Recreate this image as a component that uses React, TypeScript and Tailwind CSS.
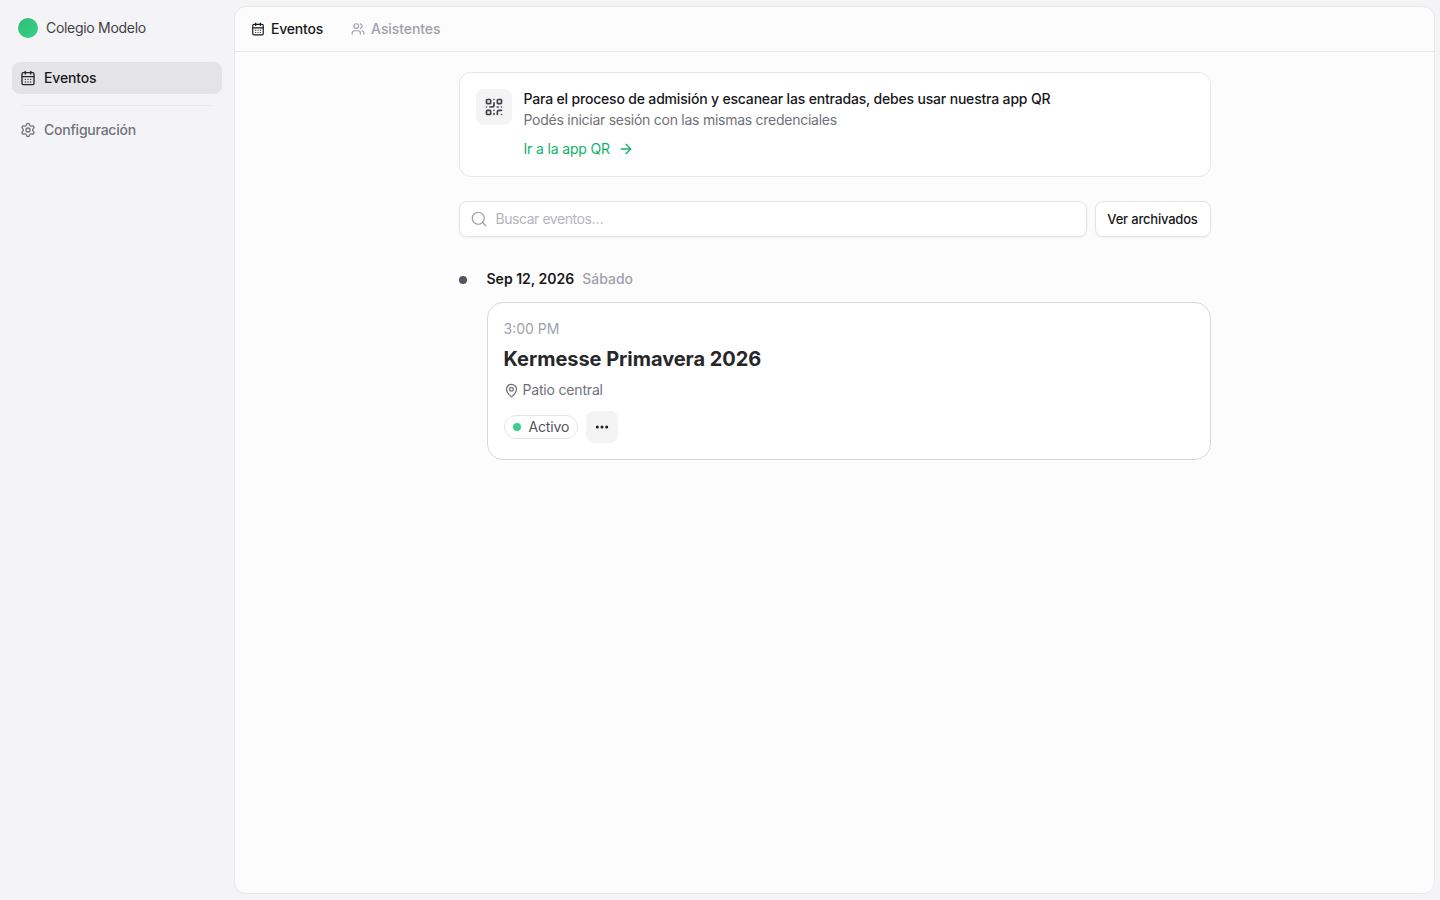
import { CalendarDays, Settings, Users, QrCode, ArrowRight, Search, MapPin, Ellipsis } from "lucide-react";

export default function App() {
  return (
    <div className="flex h-[900px] overflow-hidden bg-[#f4f4f6] font-['Inter',sans-serif] text-[#18181b]">
      <aside className="w-[234px] shrink-0 flex flex-col px-3">
        <div className="flex items-center gap-2 h-10 mt-2 px-[6px]">
          <span className="w-5 h-5 rounded-full bg-gradient-to-br from-[#2fbd76] via-[#34c77f] to-[#3ad08a]" />
          <span className="text-sm tracking-[-0.3px] text-[#3f3f46]">Colegio Modelo</span>
        </div>
        <div className="mt-[14px] h-8 rounded-lg bg-[#e4e4e7] flex items-center gap-2 px-2 text-sm tracking-[-0.14px] font-medium text-[#18181b]">
          <CalendarDays size={16} className="text-[#27272a]" />
          Eventos
        </div>
        <div className="mx-[10px] mt-[11px] mb-2 h-px bg-[#ebebee]" />
        <div className="h-8 flex items-center gap-2 px-2 text-sm tracking-[-0.23px] font-medium text-[#71717a]">
          <Settings size={16} />
          Configuración
        </div>
      </aside>
      <main className="w-[1201px] shrink-0 mt-[6px] h-[888px] rounded-xl border border-[#e8e8eb] bg-[#fcfcfc] flex flex-col">
        <nav className="h-[45px] shrink-0 border-b border-[#e8e8eb] flex items-center gap-7 px-4 text-sm font-medium">
          <div className="flex items-center gap-[6px] tracking-[-0.2px] text-[#18181b]">
            <CalendarDays size={14} />
            Eventos
          </div>
          <div className="flex items-center gap-[6px] tracking-[-0.08px] text-[#a1a1aa]">
            <Users size={14} />
            Asistentes
          </div>
        </nav>
        <div className="w-[752px] mx-auto pt-5 flex flex-col">
          <section className="h-[105px] rounded-xl border border-[#e6e6e8] bg-white flex gap-3 p-4">
            <div className="w-9 h-9 shrink-0 rounded-lg bg-[#f4f4f5] flex items-center justify-center">
              <QrCode size={20} className="text-[#3f3f46]" />
            </div>
            <div className="flex flex-col items-start">
              <p className="text-sm leading-[20px] tracking-[-0.18px] font-medium text-[#18181b]">
                Para el proceso de admisión y escanear las entradas, debes usar nuestra app QR
              </p>
              <p className="text-sm leading-[20px] mt-px tracking-[-0.26px] text-[#71717a]">Podés iniciar sesión con las mismas credenciales</p>
              <a className="mt-[9px] flex items-center gap-2 text-sm leading-[20px] tracking-[-0.16px] text-[#10b169]">
                Ir a la app QR
                <ArrowRight size={16} />
              </a>
            </div>
          </section>
          <div className="flex gap-2 mt-6 h-9">
            <div className="flex-1 rounded-lg border border-[#e4e4e7] bg-white shadow-[0_1px_2px_rgba(0,0,0,0.05)] flex items-center gap-2 px-2.5">
              <Search size={18} strokeWidth={1.6} className="text-[#a1a1aa]" />
              <span className="text-sm tracking-[-0.45px] text-[#b4b4bb]">Buscar eventos…</span>
            </div>
            <button className="w-[116px] pt-px rounded-lg border border-[#e4e4e7] bg-white shadow-[0_1px_2px_rgba(0,0,0,0.05)] text-[13px] tracking-[-0.2px] font-medium text-[#18181b]">
              Ver archivados
            </button>
          </div>
          <div className="flex items-center mt-[32px] h-5 text-sm font-semibold">
            <span className="w-2 h-2 mt-0.5 rounded-full bg-[#55555f] mr-5" />
            <span className="text-[#18181b]">Sep 12, 2026</span>
            <span className="ml-2 text-[#a1a1aa] font-medium">Sábado</span>
          </div>
          <article className="ml-7 mt-[13px] h-[158px] rounded-2xl border border-[#d9d9dc] bg-white px-4 pt-4">
            <div className="text-sm leading-5 text-[#a1a1aa]">3:00 PM</div>
            <h2 className="mt-1.5 text-xl leading-7 font-bold tracking-[-0.04px] text-[#27272a]">Kermesse Primavera 2026</h2>
            <div className="mt-[7px] flex items-center gap-1 text-sm leading-5 tracking-[-0.18px] text-[#71717a]">
              <MapPin size={15} />
              Patio central
            </div>
            <div className="mt-[11px] flex items-center gap-2">
              <span className="h-6 w-[74px] rounded-full border border-[#e4e4e7] flex items-center gap-2 pl-2 text-sm tracking-[-0.15px] text-[#52525b]">
                <span className="w-2 h-2 rounded-full bg-[#3ecf8e]" />
                Activo
              </span>
              <button className="w-8 h-8 rounded-lg bg-[#f4f4f5] flex items-center justify-center text-[#18181b]">
                <Ellipsis size={16} strokeWidth={2.5} />
              </button>
            </div>
          </article>
        </div>
      </main>
    </div>
  );
}
